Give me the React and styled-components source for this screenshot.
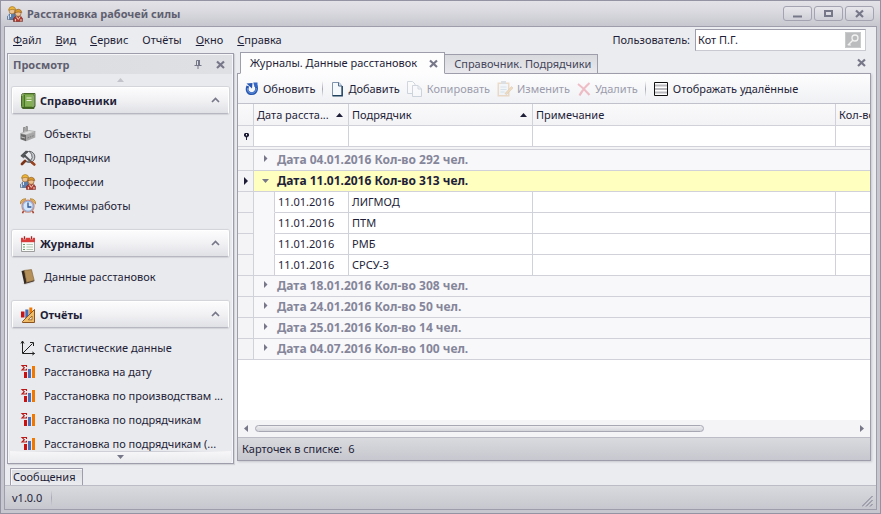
import React from "react";
import styled, { createGlobalStyle, css } from "styled-components";

const Global = createGlobalStyle`
  * { box-sizing: border-box; }
  body {
    margin: 0;
    font: 11px/14px Tahoma, "Noto Sans", sans-serif;
    color: #1e1e38;
    cursor: default;
  }
  button, input { font: inherit; color: inherit; }
  button { border: 0; padding: 0; background: none; white-space: nowrap; }
`;

const bold = css`
  font-size: 11px;
  font-weight: 700;
`;

const Window = styled.div`
  height: 100vh;
  display: flex;
  flex-direction: column;
  border: 1px solid #9393a3;
  background: #c7c7d0;
  padding: 0 3px 3px;
`;

const TitleBar = styled.header`
  flex: none;
  height: 25px;
  margin: 0 -3px;
  padding: 0 6px;
  display: flex;
  align-items: center;
  gap: 4px;
  color: #5f5f70;
  background: linear-gradient(#e2e2e7, #dadae0 40%, #c7c7cf);
`;

const Title = styled.h1`
  ${bold}
  flex: 1;
  margin: 0;
`;

const CaptionButtons = styled.div`
  display: flex;
  gap: 2px;
`;

const CaptionButton = styled.button`
  width: 29px;
  height: 15px;
  display: grid;
  place-items: center;
  border: 1px solid #a3a3b1;
  border-radius: 3px;
  color: #77778a;
  background: linear-gradient(#e6e6eb, #cfcfd7);
`;

const Client = styled.div`
  flex: 1;
  min-height: 0;
  display: flex;
  flex-direction: column;
  border: 1px solid #9d9dab;
  background: #ebecef;
`;

const TopRow = styled.div`
  flex: none;
  height: 25px;
  display: flex;
  align-items: center;
  justify-content: space-between;
  padding: 0 10px 0 1px;
`;

const MenuBar = styled.nav`
  display: flex;
  height: 25px;
`;

const MenuItem = styled.button`
  padding: 1px 7px 0;
`;

const UserField = styled.label`
  display: flex;
  align-items: center;
  gap: 5px;
`;

const UserBox = styled.span`
  display: flex;
  align-items: center;
  width: 171px;
  height: 22px;
  padding-right: 4px;
  border: 1px solid #c9c9d1;
  border-top-color: #9d9dab;
  border-left-color: #9d9dab;
  background: #fff;
`;

const UserInput = styled.input`
  flex: 1;
  min-width: 0;
  padding: 0 2px;
  border: 0;
  outline: 0;
  background: none;
`;

const KeyButton = styled.button`
  display: flex;
`;

const Workspace = styled.div`
  flex: 1;
  min-height: 0;
  display: flex;
  gap: 3px;
  padding: 0 5px 0 2px;
`;

const Sidebar = styled.aside`
  flex: none;
  width: 227px;
  margin: 1px 0 4px;
  display: flex;
  flex-direction: column;
  border: 1px solid #9d9dab;
  box-shadow: inset 0 0 0 1px #f6f6f8, 1px 1px 1px #d2d3d9;
  background: #e9eaed;
`;

const SidebarHeader = styled.h2`
  ${bold}
  flex: none;
  height: 19px;
  margin: 1px 1px 0;
  padding: 0 7px 0 4px;
  display: flex;
  align-items: center;
  gap: 14px;
  color: #5f5f70;
  background: linear-gradient(90deg, #dcdde1, #dfe0e4);
  & > span { flex: 1; }
`;

const IconButton = styled.button`
  display: grid;
  place-items: center;
  color: #77778a;
`;

const ScrollHint = styled.div`
  flex: none;
  height: 12px;
  margin: 0 2px;
  display: grid;
  place-items: center;
  color: ${(p) => (p.$faint ? "#c2c3cb" : "#77778a")};
  background: ${(p) =>
    p.$faint
      ? "none"
      : `linear-gradient(90deg, transparent, #cfd0d7 30%, #cfd0d7 70%, transparent) top / 100% 1px no-repeat,
         linear-gradient(#f7f7f9, #e9eaed)`};
`;

const Groups = styled.nav`
  flex: 1;
  min-height: 0;
  overflow: hidden;
  display: flex;
  flex-direction: column;
  gap: 12px;
  padding: 1px 4px 0;
`;

const Group = styled.section`
  flex: none;
`;

const GroupHeader = styled.button`
  ${bold}
  && { font-weight: 700; }
  width: 100%;
  height: 27px;
  display: flex;
  align-items: center;
  gap: 4px;
  padding: 0 8px 0 7px;
  text-align: left;
  border: 1px solid #fff;
  border-bottom-color: #b6b7c0;
  border-radius: 2px;
  box-shadow: 0 0 1px 1px #d2d3d9;
  background: linear-gradient(#fcfcfd, #f1f1f4 50%, #e0e1e5);
  & > span { flex: 1; }
`;

const Items = styled.ul`
  list-style: none;
  margin: 8px 0 0;
  padding: 0 0 0 8px;
`;

const ItemLink = styled.a`
  height: 24px;
  display: flex;
  align-items: center;
  gap: 8px;
  color: inherit;
  text-decoration: none;
  white-space: nowrap;
`;

const Documents = styled.main`
  flex: 1;
  min-width: 0;
  margin-bottom: 7px;
  display: flex;
  flex-direction: column;
`;

const Tabs = styled.div`
  flex: none;
  height: 22px;
  margin-bottom: -1px;
  padding-left: 3px;
  display: flex;
  align-items: flex-end;
  z-index: 1;
  & > button:last-child { margin: 0 5px 7px auto; }
`;

const Tab = styled.div`
  display: flex;
  align-items: center;
  gap: 12px;
  height: ${(p) => (p.$active ? 22 : 20)}px;
  padding: 0 6px 0 9px;
  white-space: nowrap;
  border: 1px solid #9d9dab;
  border-bottom-color: ${(p) => (p.$active ? "#fdfdfd" : "#9d9dab")};
  border-left-width: ${(p) => (p.$active ? 1 : 0)}px;
  color: ${(p) => (p.$active ? "#1e1e38" : "#45455a")};
  background: ${(p) => (p.$active ? "#fdfdfd" : "linear-gradient(#d9dade, #e9e9ed)")};
`;

const Panel = styled.div`
  flex: 1;
  min-height: 0;
  display: flex;
  flex-direction: column;
  border: 1px solid #9d9dab;
  box-shadow: 1px 1px 2px #c6c7cf;
  background: #fff;
`;

const Toolbar = styled.div`
  flex: none;
  height: 30px;
  display: flex;
  align-items: center;
  padding-left: 7px;
  border-bottom: 1px solid #c0c1ca;
  background: linear-gradient(#fdfdfe, #f0f1f4);
`;

const ToolButton = styled.button`
  display: flex;
  align-items: center;
  gap: 4px;
  margin-right: 7px;
  &:disabled { color: #9c9cac; }
  &:disabled svg { opacity: 0.35; }
`;

const Divider = styled.span`
  width: 1px;
  height: 16px;
  margin-right: 7px;
  background: linear-gradient(transparent, #a9aab5, transparent);
`;

const GridArea = styled.div`
  flex: 1;
  min-height: 0;
  overflow: hidden;
`;

const Table = styled.table`
  width: 100%;
  table-layout: fixed;
  border-collapse: separate;
  border-spacing: 0;
  th, td {
    height: 21px;
    padding: 0 2px 0 3px;
    overflow: hidden;
    white-space: nowrap;
    text-align: left;
    font-weight: 400;
    border-right: 1px solid #d0d1d9;
    border-bottom: 1px solid #d0d1d9;
  }
  th:last-child, td:last-child { border-right: 0; }
`;

const Col = styled.col`
  width: ${(p) => (p.$w ? `${p.$w}px` : "auto")};
`;

const HeadRow = styled.tr`
  th { height: 22px; background: linear-gradient(#fafafb, #f3f3f6); }
`;

const HeadCell = styled.span`
  display: flex;
  align-items: center;
  justify-content: space-between;
  padding-right: 3px;
`;

const Separator = styled.tr`
  td { height: 3px; padding: 0; border-right: 0; background: #f4f4f6; }
`;

const Marker = styled.td`
  background: #f4f4f6;
  color: #1e1e38;
  svg { display: block; margin: 0 auto; }
`;

const Indent = styled.td`
  && { border-bottom-color: ${(p) => (p.$last ? "#d0d1d9" : "#f8f8fa")}; }
  background: #f8f8fa;
`;

const GroupCell = styled.td`
  && {
    font-size: 12px;
    padding-left: 7px;
    color: ${(p) => (p.$current ? "#1e1e38" : "#85869a")};
    background: ${(p) => (p.$current ? "#ffffc0" : "#f8f8fa")};
  }
`;

const Expander = styled.button`
  display: flex;
  align-items: center;
  gap: 8px;
  && { font-weight: 700; }
  & > svg { color: #77778a; }
`;

const ScrollBar = styled.div`
  flex: none;
  height: 17px;
  display: flex;
  align-items: center;
  gap: 7px;
  padding: 0 6px;
  color: #77778a;
  background: #f4f4f6;
`;

const Track = styled.div`
  flex: 1;
`;

const Thumb = styled.div`
  width: 75%;
  height: 7px;
  border: 1px solid #a6a7b3;
  border-radius: 4px;
  background: linear-gradient(#eeeef1, #d3d4da);
`;

const CountBar = styled.footer`
  flex: none;
  height: 23px;
  display: flex;
  align-items: center;
  gap: 6px;
  padding-left: 4px;
  border-top: 1px solid #bbbcc5;
  background: linear-gradient(#d9dade, #c7c8cf);
`;

const MessagesRow = styled.div`
  flex: none;
  padding-left: 5px;
  display: flex;
`;

const MessagesTab = styled.button`
  width: 73px;
  height: 17px;
  padding: 0 2px;
  text-align: left;
  border: 1px solid #9d9dab;
  border-bottom: 0;
  box-shadow: inset 1px 1px 0 #f8f8fa;
  background: linear-gradient(#dcdde1, #ebecef);
`;

const StatusBar = styled.footer`
  flex: none;
  height: 24px;
  display: flex;
  align-items: center;
  gap: 9px;
  padding: 0 3px 0 7px;
  border-top: 1px solid #bbbcc5;
  background: linear-gradient(#d9dade, #c7c8cf);
  & > svg { margin-left: auto; align-self: flex-end; margin-bottom: 2px; }
`;

const Cross = () => (
  <svg width="9" height="9" viewBox="0 0 9 9" aria-hidden="true">
    <path d="M1 1.500L8 8M8 1.500L1 8" stroke="currentColor" strokeWidth="2.200" />
  </svg>
);

const Triangle = ({ dir, w = 7, h = 4 }) => {
  const d = {
    up: `M0 ${h}L${w / 2} 0L${w} ${h}z`,
    down: `M0 0H${w}L${w / 2} ${h}z`,
    right: `M0 0L${w} ${h / 2}L0 ${h}z`,
    left: `M${w} 0L0 ${h / 2}L${w} ${h}z`,
  }[dir];
  return (
    <svg width={w} height={h} aria-hidden="true">
      <path d={d} fill="currentColor" />
    </svg>
  );
};

const Icon = ({ children, w = 16 }) => (
  <svg width={w} height="16" viewBox={`0 0 ${w} 16`} aria-hidden="true">
    {children}
  </svg>
);

const Workers = () => (
  <Icon>
    <path d="M.6 13.5V10.5L3 7.5h5l1 6z" fill="#5c7eab" stroke="#3d5372" strokeWidth=".6" />
    <path d="M1.6 9.4v4M3.5 8v3" stroke="#dce4ef" />
    <circle cx="5" cy="5" r="2.9" fill="#edc391" stroke="#8f6432" strokeWidth=".6" />
    <path d="M1.5 4.2Q2 .5 5.2 .5T8.8 4q-3.6-1.3-7.3.2z" fill="#eeb73b" stroke="#9b6b1b" strokeWidth=".6" />
    <path d="M6.5 15.5v-3L9 9.8h4.4l2 2.7v3z" fill="#ad3c35" stroke="#6f211f" strokeWidth=".6" />
    <path d="M9.3 10.4l2 3 2-3M8.4 13v2.4M14 13v2.4" stroke="#ecd0ba" fill="none" />
    <circle cx="11.1" cy="7.5" r="2.9" fill="#edbf8e" stroke="#85522c" strokeWidth=".6" />
    <path d="M7.6 6.7q.6-3.5 3.6-3.5t3.6 3.3q-3.6-1-7.2.2z" fill="#d99b2e" stroke="#8d5317" strokeWidth=".6" />
  </Icon>
);

const GreenBook = () => (
  <Icon>
    <path d="M1.5 2.5q0-2 2-2h11.500v13h-1v2h-11q-1.500-.5-1.500-2z" fill="#dfe6cf" stroke="#48652a" />
    <path d="M2 3V14.5H12.8V2.5H14V1H3.4z" fill="#6d9a43" />
    <path d="M4.5 2v12" stroke="#4a7428" />
    <path d="M5 2h8v11H5z" fill="#85af57" />
    <path d="M6.500 5h5M6.500 7.500h5" stroke="#e5efd3" />
    <path d="M2 14.5h12v-13" fill="none" stroke="#3f6221" />
  </Icon>
);

const Factory = () => (
  <Icon>
    <path d="M3.5 6V1.5h1.500v4M6 5V.5h1.400v5" fill="#bbb" stroke="#777" strokeWidth=".7" />
    <path d="M.5 7.5L9 4.5l6.300 1L6 9z" fill="#dedede" stroke="#888" strokeWidth=".5" />
    <path d="M.5 7.700L6 9v6.200l-5.500-2z" fill="#686868" />
    <path d="M6 9l9.300-3.300v5.800L6 15.200z" fill="#a6a6a6" />
    <path d="M1.500 11l3.500 1" stroke="#eee" strokeDasharray="1.3 .7" />
    <path d="M7.500 12l6.500-2.500" stroke="#7b7b7b" strokeDasharray="1.5 1" />
  </Icon>
);

const HammerSickle = () => (
  <Icon>
    <path d="M9 1.200q5 .6 5.800 4.800.4 5-4.300 6.400-3 .5-5.300-1.200 5.800 1 7-3.600Q12.600 4 9 1.200z" fill="#c9ccd0" stroke="#44474b" strokeWidth=".8" />
    <path d="M5 11l-3 3" stroke="#7c3317" strokeWidth="2.800" strokeLinecap="round" />
    <path d="M4.500 5.500l8.500 8" stroke="#55575a" strokeWidth="2" />
    <path d="M11.800 12.300l2.500 2.200" stroke="#9b4320" strokeWidth="2.600" strokeLinecap="round" />
    <path d="M.8 5.800l5-4.700 2.700.4L4.500 5l1 1-2 1.800z" fill="#55585b" stroke="#2d2f31" strokeWidth=".6" />
  </Icon>
);

const Clock = () => (
  <Icon>
    <path d="M3.500 13l-1 2.300M12.500 13l1 2.300" stroke="#a33d30" strokeWidth="1.600" />
    <path d="M.3 6Q.3.600 6 .8zM15.700 6Q15.700.600 10 .8z" fill="#e9b95c" stroke="#a87521" strokeWidth=".7" />
    <circle cx="8" cy="8.200" r="6" fill="#d5e5fa" stroke="#c98c7c" strokeWidth="1.300" />
    <circle cx="8" cy="8.200" r="5" fill="none" stroke="#7ea6df" strokeWidth=".9" />
    <path d="M8 4.500V9h3.400" fill="none" stroke="#2d5598" strokeWidth="1.300" />
  </Icon>
);

const CalendarIcon = () => (
  <Icon>
    <path d="M1.500 2.500h13v13h-13z" fill="#f7faf7" stroke="#888" strokeWidth=".8" />
    <path d="M1 1.800h14v4.400H1z" fill="#d93c3a" />
    <path d="M4.500 0v3.500M11.500 0v3.500" stroke="#f3c9c9" strokeWidth="2.400" />
    <path d="M4.500 .3v3M11.500 .3v3" stroke="#7a3333" />
    <path d="M3 8.500h2M3 11h2M3 13.500h2" stroke="#69a169" />
    <path d="M6.500 8.500h6.500M6.500 11h6.500M6.500 13.500h6.500" stroke="#b3c9b3" />
  </Icon>
);

const BrownBook = () => (
  <Icon>
    <path d="M2 14l10-1.500 2 1-9 2.500z" fill="#d5d5d9" />
    <path d="M1.500 2l3-.7L6.800 13.500l-2.500 1.300z" fill="#35291f" />
    <path d="M4.300 1.400L11.500.6l2.700 10.800-7.500 2z" fill="#b59059" stroke="#7d5e33" strokeWidth=".6" />
    <path d="M4.300 14.600l10-2.800" stroke="#4b3a2c" />
  </Icon>
);

const ReportIcon = () => (
  <Icon>
    <path d="M1 4.500h3.500v6H1z" fill="#c81414" />
    <path d="M5.300 2.500h3.200V11H5.300z" fill="#3f6dbb" />
    <path d="M9.300 .5h3v9h-3z" fill="#f07a00" />
    <path d="M2.500 15.500V14.500L14.500 2.500v13z" fill="#eebb68" stroke="#8c531d" />
    <path d="M8.300 12.800l3.700-3.800v3.800z" fill="#fff3dc" stroke="#8c531d" strokeWidth=".8" />
  </Icon>
);

const AxesIcon = () => (
  <Icon>
    <path d="M2.500 1v12.500h12M3 13L12.500 3.500" fill="none" stroke="#222" />
    <path d="M1 3.500L2.500 1 4 3.500M12.300 12l2.200 1.500-2.200 1.500M10 2.500h3.500V6" fill="none" stroke="#222" />
  </Icon>
);

const SigmaBars = () => (
  <Icon>
    <path d="M6.500 3V1.500H2L4.300 3.700 2 6h4.500V4.800" fill="none" stroke="#b81818" strokeWidth="1.100" />
    <path d="M4 8h3v6H4z" fill="#cc1010" />
    <path d="M8 5h3v9H8z" fill="#4a72b6" />
    <path d="M12 2h3v12h-3z" fill="#f07800" />
  </Icon>
);

const RefreshIcon = () => (
  <Icon w={14}>
    <path d="M2.800 5C1 9.500 3 12.600 6.700 12.600s6-3.500 4.300-8.100" fill="none" stroke="#2757b0" strokeWidth="2.800" />
    <path d="M2.600 7C2 10.500 4 12.200 6.700 12.200s4.900-2.200 4.600-5.200" fill="none" stroke="#6c9be4" />
    <path d="M8.300 1.500h4.200v4.500H9.500z" fill="#3568c6" />
    <path d="M1.500 2.500L7.500 2 7 7.500z" fill="#2757b0" />
  </Icon>
);

const PageIcon = () => (
  <Icon w={14}>
    <path d="M2.500 1.500h6.500l3 3.500v9.500h-9.500z" fill="#f6f9fc" stroke="#7f94ac" />
    <path d="M12.200 5v9.700H2.500" fill="none" stroke="#20425f" strokeWidth="1.400" />
    <path d="M8.500 1.500V5H12" fill="#d5e0ea" stroke="#536e8c" />
  </Icon>
);

const CopyIcon = () => (
  <Icon>
    <path d="M.5 .5h5L8 3v9.500H.5z" fill="#fff" stroke="#8797ad" />
    <path d="M5.500 4.500h5.500L14.500 8v7.500h-9z" fill="#fff" stroke="#8797ad" />
    <path d="M11 4.500V8h3.500" fill="none" stroke="#8797ad" />
  </Icon>
);

const EditIcon = () => (
  <Icon>
    <path d="M.5 1.500h12v14H.5z" fill="#d9a56d" />
    <path d="M2 3h9v11H2z" fill="#e9f2f8" />
    <path d="M4 0h5v3H4z" fill="#a5aeb8" />
    <path d="M3.500 6h6M3.500 8.500h6M3.500 11h4" stroke="#9eb9cd" />
    <path d="M8 12.500l6.500-7 1.500 1.600-6.500 6.500z" fill="#e4a951" stroke="#a77c3e" strokeWidth=".6" />
  </Icon>
);

const DeleteIcon = () => (
  <Icon w={14}>
    <path d="M1 3q5.500 4 11.500 11M12.500 2Q6 7.500 2.500 14.500" fill="none" stroke="#df5267" strokeWidth="2" />
  </Icon>
);

const RowsIcon = () => (
  <Icon>
    <path d="M1.500 1.500h13v13h-13z" fill="#fff" />
    <path d="M2 4.500h12M2 8h12M2 11.500h12" stroke="#b9b9bd" strokeWidth="2" />
    <path d="M1.500 1.500h13v13h-13z" fill="none" stroke="#111" />
  </Icon>
);

const KeyIcon = () => (
  <Icon>
    <path d="M0 0h16v16H0z" fill="#bbbcbe" />
    <path d="M.5 .5h15v15H.5z" fill="none" stroke="#c9cacc" />
    <circle cx="10" cy="6" r="3" fill="none" stroke="#f2f2f2" strokeWidth="1.300" />
    <path d="M7.800 8.200L2.800 13.300M4 12l1.500 1.500" stroke="#f2f2f2" strokeWidth="1.400" />
  </Icon>
);

const PinIcon = () => (
  <svg width="8" height="9" viewBox="0 0 8 9" aria-hidden="true">
    <path d="M2.500 5V.5h3V5M.500 5.500h7M4 5.500V9" fill="none" stroke="currentColor" />
    <path d="M4 0h2v5.500h-2z" fill="currentColor" />
  </svg>
);

const FilterPin = () => (
  <svg width="5" height="7" viewBox="0 0 5 7" aria-hidden="true">
    <path d="M0 1l1-1h3l1 1v2L3 4.500V7H2V4.500L0 3z" fill="currentColor" />
    <path d="M2 1h1v1.500H2z" fill="#fff" />
  </svg>
);

const Chevron = () => (
  <svg width="9" height="8" viewBox="0 0 9 8" aria-hidden="true">
    <path d="M1 5l3.500-3.500L8 5" fill="none" stroke="#77778a" strokeWidth="1.700" />
  </svg>
);

const groups = [
  {
    title: "Справочники",
    icon: <GreenBook />,
    items: [
      ["Объекты", <Factory />],
      ["Подрядчики", <HammerSickle />],
      ["Профессии", <Workers />],
      ["Режимы работы", <Clock />],
    ],
  },
  {
    title: "Журналы",
    icon: <CalendarIcon />,
    items: [["Данные расстановок", <BrownBook />]],
  },
  {
    title: "Отчёты",
    icon: <ReportIcon />,
    items: [
      ["Статистические данные", <AxesIcon />],
      ["Расстановка на дату", <SigmaBars />],
      ["Расстановка по производствам ...", <SigmaBars />],
      ["Расстановка по подрядчикам", <SigmaBars />],
      ["Расстановка по подрядчикам (...", <SigmaBars />],
    ],
  },
];

const menu = [
  ["Ф", "айл"],
  ["В", "ид"],
  ["С", "ервис"],
  ["", "Отчёты"],
  ["О", "кно"],
  ["С", "правка"],
];

const dates = [
  { label: "Дата 04.01.2016 Кол-во 292 чел." },
  {
    label: "Дата 11.01.2016 Кол-во 313 чел.",
    current: true,
    date: "11.01.2016",
    rows: ["ЛИГМОД", "ПТМ", "РМБ", "СРСУ-3"],
  },
  { label: "Дата 18.01.2016 Кол-во 308 чел." },
  { label: "Дата 24.01.2016 Кол-во 50 чел." },
  { label: "Дата 25.01.2016 Кол-во 14 чел." },
  { label: "Дата 04.07.2016 Кол-во 100 чел." },
];

const NavGroup = ({ title, icon, items }) => (
  <Group>
    <GroupHeader>
      {icon}
      <span>{title}</span>
      <Chevron />
    </GroupHeader>
    <Items>
      {items.map(([label, glyph]) => (
        <li key={label}>
          <ItemLink href="#">
            {glyph}
            {label}
          </ItemLink>
        </li>
      ))}
    </Items>
  </Group>
);

const DateGroup = ({ label, current, date, rows = [] }) => (
  <>
    <tr>
      <Marker>{current && <Triangle dir="right" w={4} h={8} />}</Marker>
      <GroupCell colSpan={5} $current={current}>
        <Expander aria-expanded={!!current}>
          <Icon w={8}>
            <path d={current ? "M1 6h7L4.500 10z" : "M3 3l3.500 3.500-3.500 3.500z"} fill="currentColor" />
          </Icon>
          {label}
        </Expander>
      </GroupCell>
    </tr>
    {rows.map((name, i) => (
      <tr key={name}>
        <Marker />
        <Indent $last={i === rows.length - 1} />
        <td>{date}</td>
        <td>{name}</td>
        <td />
        <td />
      </tr>
    ))}
  </>
);

export default function App() {
  return (
    <>
      <Global />
      <Window>
        <TitleBar>
          <Workers />
          <Title>Расстановка рабочей силы</Title>
          <CaptionButtons>
            <CaptionButton aria-label="Свернуть">
              <svg width="9" height="8"><path d="M0 6.500h9" stroke="currentColor" strokeWidth="2" /></svg>
            </CaptionButton>
            <CaptionButton aria-label="Развернуть">
              <svg width="9" height="7"><path d="M1 1h7v5H1z" fill="none" stroke="currentColor" strokeWidth="2" /></svg>
            </CaptionButton>
            <CaptionButton aria-label="Закрыть">
              <Cross />
            </CaptionButton>
          </CaptionButtons>
        </TitleBar>
        <Client>
          <TopRow>
            <MenuBar>
              {menu.map(([key, rest]) => (
                <MenuItem key={key + rest}>
                  <u>{key}</u>
                  {rest}
                </MenuItem>
              ))}
            </MenuBar>
            <UserField>
              Пользователь:
              <UserBox>
                <UserInput defaultValue="Кот П.Г." />
                <KeyButton aria-label="Сменить пароль">
                  <KeyIcon />
                </KeyButton>
              </UserBox>
            </UserField>
          </TopRow>
          <Workspace>
            <Sidebar>
              <SidebarHeader>
                <span>Просмотр</span>
                <IconButton aria-label="Закрепить"><PinIcon /></IconButton>
                <IconButton aria-label="Закрыть панель"><Cross /></IconButton>
              </SidebarHeader>
              <ScrollHint $faint><Triangle dir="up" /></ScrollHint>
              <Groups>
                {groups.map((g) => (
                  <NavGroup key={g.title} {...g} />
                ))}
              </Groups>
              <ScrollHint><Triangle dir="down" /></ScrollHint>
            </Sidebar>
            <Documents>
              <Tabs>
                <Tab $active>
                  Журналы. Данные расстановок
                  <IconButton aria-label="Закрыть вкладку"><Cross /></IconButton>
                </Tab>
                <Tab>Справочник. Подрядчики</Tab>
                <IconButton aria-label="Закрыть документ"><Cross /></IconButton>
              </Tabs>
              <Panel>
                <Toolbar>
                  <ToolButton><RefreshIcon />Обновить</ToolButton>
                  <Divider />
                  <ToolButton><PageIcon />Добавить</ToolButton>
                  <ToolButton disabled><CopyIcon />Копировать</ToolButton>
                  <ToolButton disabled><EditIcon />Изменить</ToolButton>
                  <ToolButton disabled><DeleteIcon />Удалить</ToolButton>
                  <Divider />
                  <ToolButton><RowsIcon />Отображать удалённые</ToolButton>
                </Toolbar>
                <GridArea>
                  <Table>
                    <colgroup>
                      <Col $w={16} />
                      <Col $w={21} />
                      <Col $w={74} />
                      <Col $w={184} />
                      <Col $w={303} />
                      <Col />
                    </colgroup>
                    <thead>
                      <HeadRow>
                        <th />
                        <th colSpan={2}><HeadCell>Дата расста... <Triangle dir="up" /></HeadCell></th>
                        <th><HeadCell>Подрядчик <Triangle dir="up" /></HeadCell></th>
                        <th>Примечание</th>
                        <th>Кол-во</th>
                      </HeadRow>
                    </thead>
                    <tbody>
                      <tr>
                        <Marker><FilterPin /></Marker>
                        <td colSpan={2} />
                        <td />
                        <td />
                        <td />
                      </tr>
                      <Separator><td colSpan={6} /></Separator>
                      {dates.map((d) => (
                        <DateGroup key={d.label} {...d} />
                      ))}
                    </tbody>
                  </Table>
                </GridArea>
                <ScrollBar>
                  <Triangle dir="left" w={4} h={7} />
                  <Track><Thumb /></Track>
                  <Triangle dir="right" w={4} h={7} />
                </ScrollBar>
                <CountBar>
                  <span>Карточек в списке:</span>
                  <span>6</span>
                </CountBar>
              </Panel>
            </Documents>
          </Workspace>
          <MessagesRow>
            <MessagesTab>Сообщения</MessagesTab>
          </MessagesRow>
          <StatusBar>
            <span>v1.0.0</span>
            <Divider />
            <svg width="11" height="11" aria-hidden="true">
              <path d="M0 10.500L10.500 0M4 10.500L10.500 4M8 10.500L10.500 8" stroke="#77778a" />
            </svg>
          </StatusBar>
        </Client>
      </Window>
    </>
  );
}
